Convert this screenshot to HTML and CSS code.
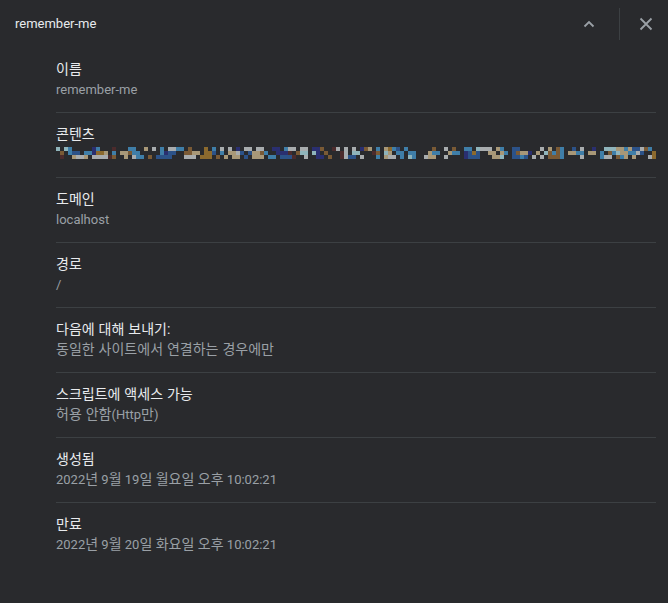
FILE: index.html
```html
<!DOCTYPE html>
<html lang="ko">
<head>
  <title>remember-me</title>
  <meta charset="UTF-8">
  <link rel="stylesheet" href="styles.css">
</head>
<body>
  <div class="header">
    <div class="title">remember-me</div>
    <button class="icon-btn">
      <svg width="24" height="24" viewBox="0 0 24 24"><path class="icon" d="M7.5 14.5 12 10l4.500 4.500"/></svg>
    </button>
    <div class="sep"></div>
    <button class="icon-btn">
      <svg width="24" height="24" viewBox="0 0 24 24"><path class="icon" d="M6.500 6.500l11 11M17.500 6.500l-11 11"/></svg>
    </button>
  </div>
  <div class="details">
    <div class="row">
      <div class="label ko">이름</div>
      <div class="value plain">remember-me</div>
    </div>
    <div class="row">
      <div class="label ko">콘텐츠</div>
      <div class="value"><svg id="mosaic" class="mosaic" width="600" height="12" viewBox="0 0 150 3" shape-rendering="crispEdges"></svg></div>
    </div>
    <div class="row">
      <div class="label ko">도메인</div>
      <div class="value plain">localhost</div>
    </div>
    <div class="row">
      <div class="label ko">경로</div>
      <div class="value plain">/</div>
    </div>
    <div class="row">
      <div class="label ko">다음에 대해 보내기:</div>
      <div class="value ko">동일한 사이트에서 연결하는 경우에만</div>
    </div>
    <div class="row">
      <div class="label ko">스크립트에 액세스 가능</div>
      <div class="value"><span class="ko">허용 안함</span>(Http<span class="ko">만</span>)</div>
    </div>
    <div class="row">
      <div class="label ko">생성됨</div>
      <div class="value date">2022<span class="ko">년</span> 9<span class="ko">월</span> 19<span class="ko">일 월요일 오후</span> 10:02:21</div>
    </div>
    <div class="row">
      <div class="label ko">만료</div>
      <div class="value date">2022<span class="ko">년</span> 9<span class="ko">월</span> 20<span class="ko">일 화요일 오후</span> 10:02:21</div>
    </div>
  </div>
  <script src="mosaic.js"></script>
</body>
</html>
```

FILE: styles.css
```css
html, body {
  margin: 0;
  height: 100%;
  background-color: #292a2d;
}

body {
  overflow: hidden;
  font-family: Roboto, "Noto Sans CJK KR", sans-serif;
  font-size: 13px;
  line-height: 20px;
  color: #e8eaed;
}

.header {
  display: flex;
  align-items: center;
  height: 48px;
  padding-left: 15px;
  padding-right: 10px;
}

.title {
  flex: 1;
}

.icon-btn {
  display: flex;
  align-items: center;
  justify-content: center;
  width: 24px;
  height: 24px;
  padding: 0;
  border: 0;
  background: none;
}

.icon {
  fill: none;
  stroke: #9aa0a6;
  stroke-width: 1.8;
}

.sep {
  width: 1px;
  height: 32px;
  margin-left: 18px;
  margin-right: 14px;
  background-color: #3c4043;
}

.details {
  margin-left: 56px;
  margin-right: 12px;
}

.row {
  padding-top: 11px;
  padding-bottom: 13px;
  border-bottom: 1px solid #3c4043;
}

.row:last-child {
  border-bottom: 0;
}

.label {
  height: 20px;
}

.ko {
  font-size: 14px;
  word-spacing: 0.5px;
}

.value {
  height: 20px;
  color: #9aa0a6;
}

.plain {
  height: 19px;
  padding-top: 1px;
}

.date .ko {
  word-spacing: 0;
}

.mosaic {
  display: block;
  padding-top: 3px;
}
```

FILE: mosaic.js
```js
// blurred cookie value, 4px blocks, 30 columns per group
const colors = {
  a: '#a8acae', b: '#8fb4bb', c: '#3f7ea8', d: '#2a2f70', e: '#2c5288',
  f: '#7a5a35', g: '#a89878', h: '#4c2b2c', i: '#8c6a2e'
};
const rows = [
  ['b.bc.....dc...h...cc..g.a.c.aa', 'cc.f...i.c.a.a.d.aa.aa..dd.caa', '.aa.ddf..ha.a.a.dfg.c.gice.c..', '....f..a.f..cc.baaa.gc..ee....', '.a.g.fc..e.a..d..bbbggcgeeafc.'],
  ['.f.cee.ccdiig.c.ggfcc.....cdee', '..ffgg.iie.c.ggae.eggfc..dddh.', 'fbb.bd.f...ha.bb...hf.bg.cc.cc', '...gcc..gcc.deie..gg.gc.efggd.', 'g.bfcfc.ggcc.gg.c.fcbggccae..i'],
  ['.h..gaag.aaaahf..g.acc.f.eeee.', '..aaa.iii.f.g.gg.e.ggg.cc.eeeh', '..a..dd.f..haee.a...c.gaa.c.bc', '..agg..a....deee...ggb..eece.a', '.a.fffc....a....caa.fcg.g...ai']
];
const mosaic = document.getElementById('mosaic');

rows.forEach((groups, y) => {
  const line = groups.map(g => g.padEnd(30, '.').slice(0, 30)).join('');
  for (let x = 0; x < line.length; x++) {
    if (line[x] === '.') continue;
    const cell = document.createElementNS('http://www.w3.org/2000/svg', 'rect');
    cell.setAttribute('x', x);
    cell.setAttribute('y', y);
    cell.setAttribute('width', 1);
    cell.setAttribute('height', 1);
    cell.setAttribute('fill', colors[line[x]]);
    mosaic.appendChild(cell);
  }
});
```
